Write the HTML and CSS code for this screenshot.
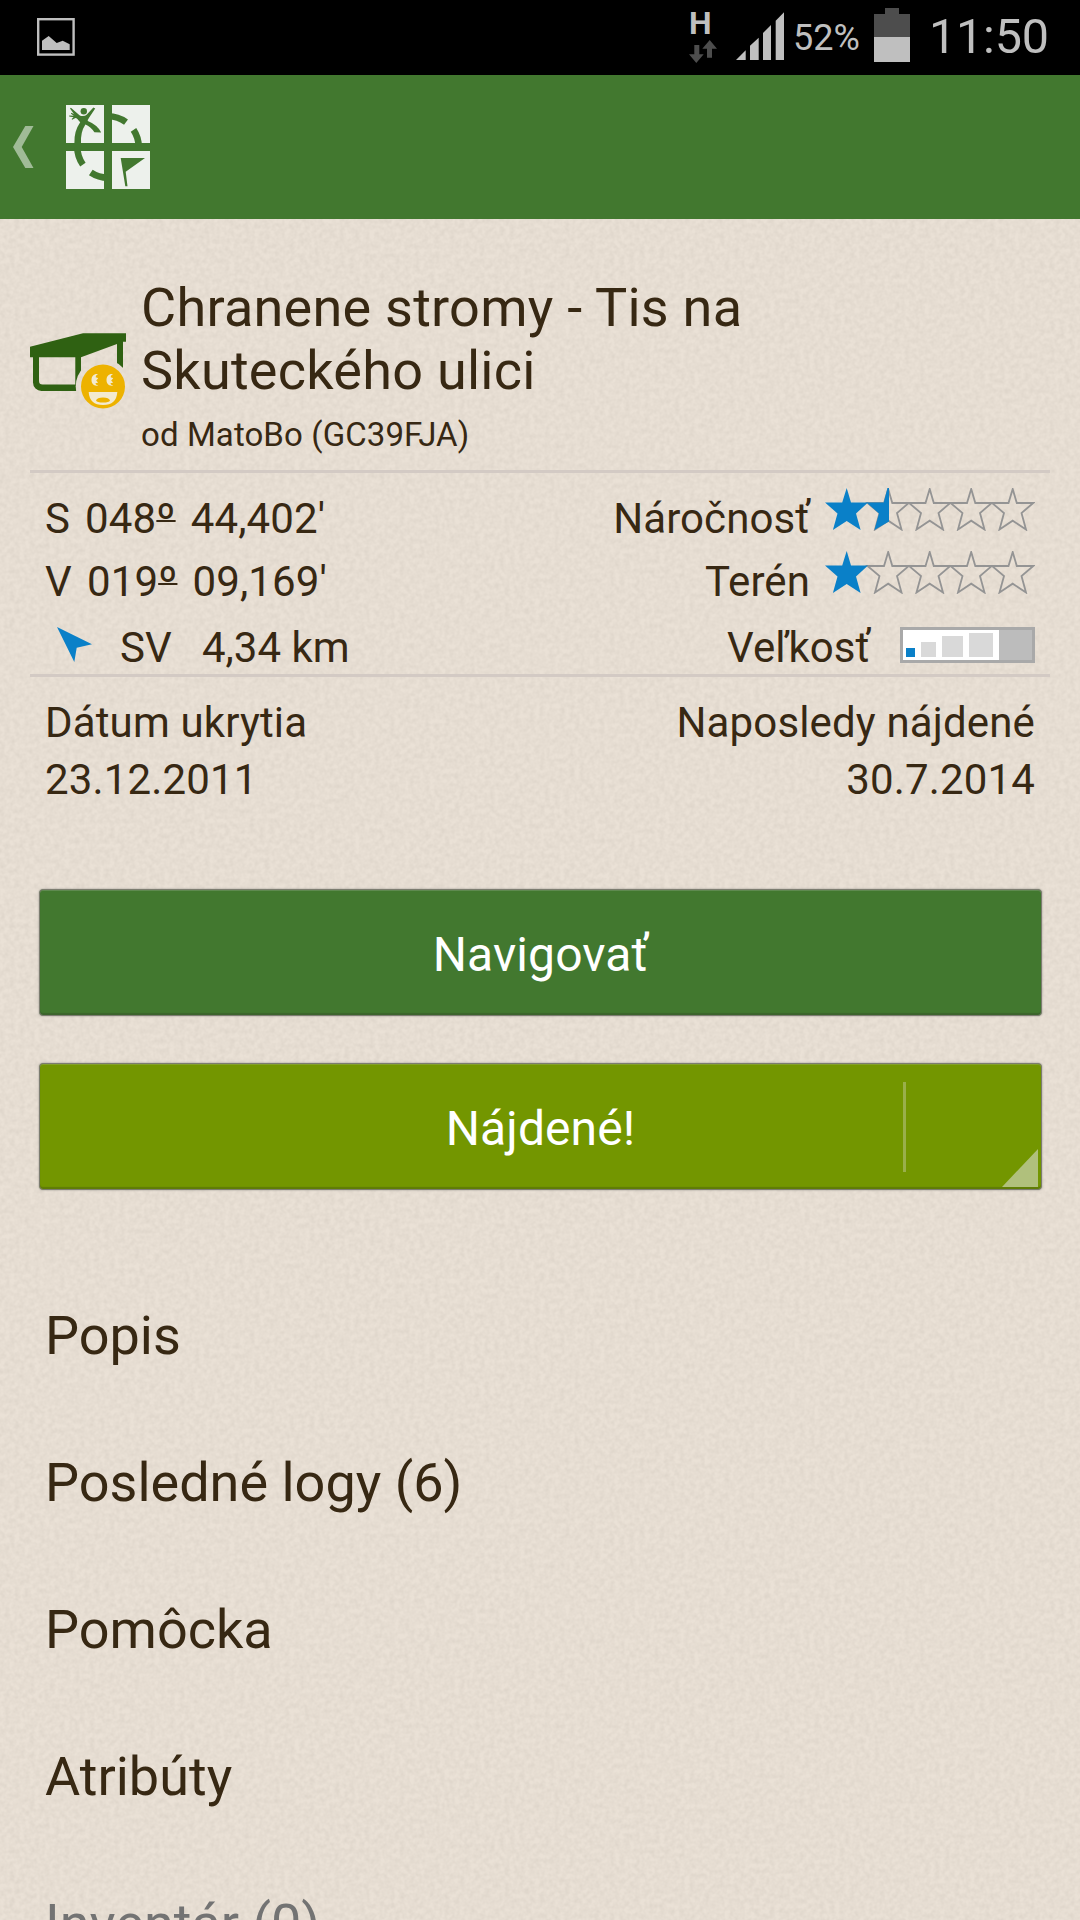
FILE: index.html
```html
<!DOCTYPE html>
<html lang="sk">
<head>
<meta charset="utf-8">
<title>Geocaching</title>
<link rel="stylesheet" href="styles.css">
</head>
<body>
<div class="screen">
  <svg class="paper" width="1080" height="1701" aria-hidden="true">
    <filter id="grain" x="0" y="0" width="100%" height="100%" color-interpolation-filters="sRGB">
      <feTurbulence type="fractalNoise" baseFrequency="0.2" numOctaves="2" seed="4"/>
      <feColorMatrix values="0 0 0 0 0.45  0 0 0 0 0.42  0 0 0 0 0.38  0.16 0 0 0 -0.045"/>
    </filter>
    <rect width="1080" height="1701" filter="url(#grain)"/>
  </svg>

  <header class="status">
    <svg class="status-picture" width="38" height="38" viewBox="0 0 38 38">
      <rect x="1.2" y="1.2" width="35.4" height="35.4" fill="none" stroke="#bfbfbf" stroke-width="2.4"/>
      <path d="M5 32V22.7L11.7 18l8 7 6-2.3 7 3.6V32z" fill="#bfbfbf"/>
    </svg>
    <div class="network">
      <span class="network-type">H</span>
      <svg width="28" height="23" viewBox="0 0 28 23" fill="#4d4d4d">
        <path d="M5.3 5h5v9.3h4.4L7.3 23 0 14.3h5.3z"/>
        <path d="M20.7 0 28 8.7h-5v9h-5v-9h-4.7z"/>
      </svg>
    </div>
    <svg class="signal" width="48" height="48" viewBox="0 0 48 48" fill="#bfbfbf">
      <path d="M0 48l9.7-9.7V48zM14 48V33.7l8.7-8V48zM27 48V21l8-8v35zM39.7 48V8.7L48 .3V48z"/>
    </svg>
    <span class="battery-level">52%</span>
    <svg class="battery" width="36" height="54" viewBox="0 0 36 54">
      <path d="M0 6h11V0h14v6h11v23H0z" fill="#4d4d4d"/>
      <path d="M0 29h36v25H0z" fill="#bfbfbf"/>
    </svg>
    <span class="clock">11:50</span>
  </header>

  <div class="appbar">
    <svg width="21" height="42" viewBox="0 0 21 42"><path d="M12.300 0h8.200L8.700 21l11.800 21h-8.200L0 21z" fill="#a0bb97"/></svg>
    <svg width="84" height="84" viewBox="0 0 84 84">
      <path d="M0 0h38v38H0zM46 0h38v38H46zM0 46h38v38H0zM46 46h38v38H46z" fill="#edf1ec"/>
      <g fill="none" stroke="#42782f" stroke-width="6.600">
        <path d="M42 11.300A30.700 30.700 0 0 1 60 17.200M67.500 24.800A30.700 30.700 0 0 1 72.700 42M11.300 42A30.700 30.700 0 0 0 16.900 59.600M24.800 67.500A30.700 30.700 0 0 0 42 72.700"/>
      </g>
      <g fill="#42782f">
        <circle cx="17.800" cy="6.200" r="3.200"/>
        <path d="M4 3.600l.9-.8 8.600 7.400q1.300.9 3.300.9 2.600-.1 3.800-1.300L27.400 2.600l1.800.8-6 9q-1.600 2.200-1.400 3.600 9.400 3.800 13.400 11.400l-6.800-.2Q24.600 21.400 19.400 19.400 14.400 27 15 38H8.400Q8 26 14.200 17.200L12 14.800z"/>
        <path d="M5.200 7.800l7.600 3.200 1.600 3.400-5-1.400-3.200 1.800-.6-.8 2-1.800-4.400-.6v-1l4.600.2-2.800-2z"/>
        <path d="M54.700 53H79L59.700 66.700l1.800 14.600h-2.200z"/>
      </g>
    </svg>
  </div>

  <main class="content">
    <section class="cache">
      <svg class="cache-icon" width="96" height="76" viewBox="0 0 96 76">
        <mask id="badge-gap"><rect width="96" height="76" fill="#fff"/><circle cx="73" cy="53.500" r="27.300" fill="#000"/></mask>
        <g mask="url(#badge-gap)">
          <path d="M0 13.700L53 .3h43v8.400h-3V40h-6V11L51 24.300V58H11.500A8.500 8.500 0 0 1 3 49.500V24.300H0zM9 24.300V48q0 3.500 3.500 3.500H45.300V24.300z" fill="#2f6112" fill-rule="evenodd"/>
        </g>
        <circle cx="73" cy="53.500" r="22" fill="#edb200"/>
        <g fill="#f3ead0">
          <path d="M68 41.200c-4-.6-6.500 2-6.500 5.800s2.800 6.600 6.800 5.400c-2.200-.2-3-1.600-2.600-2.400q1.300.2 2.300-.6l-1.800-2 2-2.200q-1.400-1-2.400-.6c-.2-1.400.6-3 2.200-3.400zM83 41.200c-4-.6-6.500 2-6.500 5.800s2.800 6.600 6.800 5.400c-2.200-.2-3-1.600-2.600-2.400q1.300.2 2.300-.6l-1.800-2 2-2.200q-1.400-1-2.400-.6c-.2-1.400.6-3 2.200-3.400z"/>
          <path d="M58.700 59h28.600q-.8 13-14.300 13T58.700 59z"/>
        </g>
        <path d="M66 67.500q1-3 7-3t7 3q-1 2-7 2t-7-2z" fill="#edb200"/>
      </svg>
      <div class="cache-heading">
        <h1 class="cache-title">Chranene stromy - Tis na<br>Skuteckého ulici</h1>
        <p class="cache-owner">od MatoBo (GC39FJA)</p>
      </div>
    </section>

    <section class="facts">
      <div class="row">
        <div class="coords"><span>S</span><span>048<span class="degree">º</span></span><span>44,402'</span></div>
        <div class="rating">
          <span>Náročnosť</span>
          <svg width="210" height="43" viewBox="0 0 210 43">
            <defs>
              <path id="star" d="M21.700 1l4.100 14H42.300L30.500 25l4.500 16.500L21.700 32.700 8.500 41.500l4.500-16.500L1 15H17.500z"/>
              <path id="star-full" d="M21.700 0l4.300 14.500H43L31 25.500 35.600 42 21.700 33 7.900 42l4.600-16.500L0 14.500h17.200z"/>
              <path id="star-half" d="M22.500 0v33.500L7.900 42l4.600-16.500L0 14.500h17.200L21 0z"/>
            </defs>
            <g fill="none" stroke="#949494" stroke-width="1.800">
              <use href="#star" x="41.500"/><use href="#star" x="83"/><use href="#star" x="124.500"/><use href="#star" x="166"/>
            </g>
            <g fill="#0a80c8"><use href="#star-full"/><use href="#star-half" x="41.500"/></g>
          </svg>
        </div>
      </div>
      <div class="row">
        <div class="coords"><span>V</span><span>019<span class="degree">º</span></span><span>09,169'</span></div>
        <div class="rating">
          <span>Terén</span>
          <svg width="210" height="43" viewBox="0 0 210 43">
            <g fill="none" stroke="#949494" stroke-width="1.800">
              <use href="#star" x="41.500"/><use href="#star" x="83"/><use href="#star" x="124.500"/><use href="#star" x="166"/>
            </g>
            <use href="#star-full" fill="#0a80c8"/>
          </svg>
        </div>
      </div>
      <div class="row row-distance">
        <div class="distance">
          <svg width="35" height="35" viewBox="0 0 35 35"><path d="M0 0l35 17.300-15.300 3.400L17.300 35z" fill="#0a80c8"/></svg>
          <span class="bearing">SV</span><span>4,34 km</span>
        </div>
        <div class="size">
          <span>Veľkosť</span>
          <svg width="135" height="36" viewBox="0 0 135 36">
            <path d="M0 0h135v36H0z" fill="#a9a9a9"/>
            <path d="M3 3h129v30H3z" fill="#bcbcbc"/>
            <path d="M3 3h96v30H3z" fill="#fff"/>
            <path d="M6 21h9v9H6z" fill="#0a80c8"/>
            <path d="M21 15h15v15H21zM42 9h21v21H42zM69 6h24v24H69z" fill="#d9d9d9"/>
          </svg>
        </div>
      </div>
    </section>

    <section class="dates">
      <div><div>Dátum ukrytia</div><div>23.12.2011</div></div>
      <div class="dates-found"><div>Naposledy nájdené</div><div>30.7.2014</div></div>
    </section>

    <div class="actions">
      <button class="button button-navigate">Navigovať</button>
      <button class="button button-found">Nájdené!
        <span class="found-divider"></span>
        <svg class="found-corner" width="36" height="38" viewBox="0 0 36 38"><path d="M36 0v38H0z" fill="#b0c07c"/></svg>
      </button>
    </div>

    <nav class="menu">
      <a class="menu-item">Popis</a>
      <a class="menu-item">Posledné logy (6)</a>
      <a class="menu-item">Pomôcka</a>
      <a class="menu-item">Atribúty</a>
      <a class="menu-item menu-item-disabled">Inventár (0)</a>
    </nav>
  </main>
</div>
</body>
</html>
```
FILE: styles.css
```css
* {
  box-sizing: border-box;
}

body {
  margin: 0;
  font-family: Roboto, "Noto Sans", sans-serif;
  color: #372813;
  background: #eae1d6;
}

svg {
  display: block;
  flex: none;
}

.screen {
  position: relative;
  height: 1920px;
  overflow: hidden;
  display: flex;
  flex-direction: column;
}

.paper {
  position: absolute;
  left: 0;
  top: 219px;
}

/* status bar */
.status {
  flex: none;
  height: 75px;
  padding-left: 37px;
  display: flex;
  align-items: center;
  background: #000;
  color: #bfbfbf;
}

.status-picture {
  margin-right: auto;
  margin-top: -1px;
}

.network {
  width: 28px;
  height: 51px;
  margin-right: 19px;
  margin-top: -1px;
  display: flex;
  flex-direction: column;
  justify-content: space-between;
}

.network-type {
  font: bold 32px/22px Roboto, sans-serif;
}

.signal {
  margin-top: -3px;
}

.battery-level {
  width: 90px;
  padding-left: 9px;
  font-size: 36px;
}

.battery {
  margin-top: -5px;
}

.clock {
  width: 170px;
  padding-left: 19px;
  margin-top: -3px;
  font-size: 48.5px;
  letter-spacing: -0.2px;
}

/* app bar */
.appbar {
  position: relative;
  flex: none;
  height: 144px;
  padding-left: 13px;
  display: flex;
  align-items: center;
  gap: 32px;
  background: #42782f;
}

/* cache details */
.content {
  position: relative;
}

.cache {
  margin: 0 30px;
  height: 254px;
  padding-top: 57px;
  display: flex;
  gap: 15px;
  border-bottom: 3px solid #d3cac4;
}

.cache-icon {
  margin-top: 57px;
}

.cache-title {
  margin: 0;
  font-size: 54px;
  line-height: 63px;
  font-weight: 400;
  letter-spacing: 0.25px;
}

.cache-owner {
  margin: 13px 0 0;
  font-size: 33px;
  line-height: 39px;
  letter-spacing: 0.1px;
}

.facts {
  margin: 0 30px;
  height: 204px;
  padding: 14px 15px 0;
  font-size: 42px;
  line-height: 63px;
  border-bottom: 3px solid #d3cac4;
}

.row {
  display: flex;
  justify-content: space-between;
}

.coords {
  display: flex;
  gap: 15px;
  letter-spacing: 0.15px;
}

.degree {
  text-decoration: underline 2px;
  text-underline-offset: -13px;
  text-decoration-skip-ink: none;
}

.rating {
  display: flex;
  gap: 15px;
  letter-spacing: 0.1px;
}

.rating svg {
  margin-top: 1px;
}

.row-distance {
  margin-top: 10px;
  line-height: 49px;
}

.distance {
  display: flex;
  padding-left: 12px;
}

.distance svg,
.size svg {
  margin-top: 4px;
}

.bearing {
  width: 82px;
  margin-left: 28px;
}

.size {
  display: flex;
  gap: 30px;
}

.dates {
  padding: 17px 45px 0;
  display: flex;
  justify-content: space-between;
  font-size: 42px;
  line-height: 57px;
  letter-spacing: 0.15px;
}

.dates-found {
  text-align: right;
}

/* buttons */
.actions {
  padding: 81px 38px 0 39px;
  display: flex;
  flex-direction: column;
  gap: 47px;
}

.button {
  position: relative;
  height: 127px;
  padding: 5px 0 0;
  font: 48px/56px Roboto, sans-serif;
  letter-spacing: 0.1px;
  color: #fff;
  border: 1px solid #7c7c70;
  border-radius: 4px;
}

.button-navigate {
  background: #42782f;
  box-shadow: inset 0 1px 0 #5f8a50, inset 0 -2px 1px #3c642c, 0 0 2px #8c8c84;
}

.button-found {
  background: #739600;
  box-shadow: inset 0 1px 0 #84a02a, inset 0 -2px 1px #5f7c06, 0 0 2px #8c8c84;
}

.found-divider {
  position: absolute;
  right: 135px;
  top: 18px;
  width: 3px;
  height: 90px;
  background: #99af4b;
}

.found-corner {
  position: absolute;
  right: 3px;
  bottom: 2px;
}

/* sections list */
.menu {
  padding: 72px 45px 0;
}

.menu-item {
  display: flex;
  align-items: center;
  height: 147px;
  font-size: 54px;
  line-height: 63px;
}

.menu-item-disabled {
  color: #737373;
}
```
